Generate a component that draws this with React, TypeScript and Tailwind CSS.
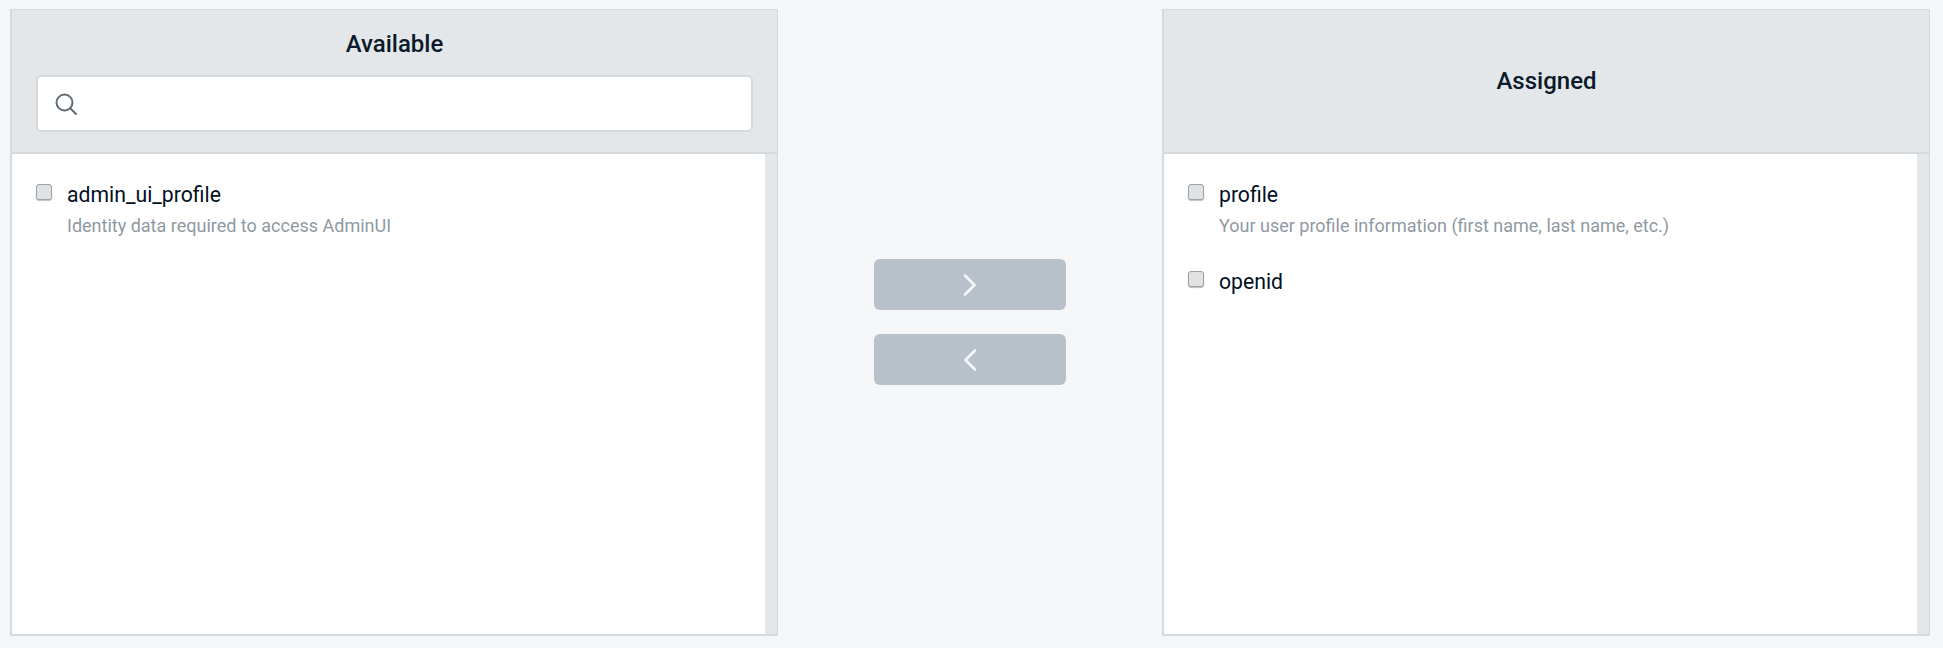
import React from "react";

const font = { fontFamily: "Roboto, sans-serif" };

function Check() {
  return (
    <span className="block w-4 h-4 shrink-0 mt-[3px] rounded-[3px] border border-[#9da1a6] bg-[#e0e2e4] shadow-[0_1px_1px_rgba(0,0,0,0.25)]" />
  );
}

function Item({ name, desc }: { name: string; desc?: string }) {
  return (
    <div className="flex gap-[15px]">
      <Check />
      <div className="min-w-0">
        <div className="text-[21.2px] leading-[28px] text-[#03101f] font-normal">{name}</div>
        {desc && <div className="text-[18px] leading-[24px] mt-[5px] text-[#8f99a3]">{desc}</div>}
      </div>
    </div>
  );
}

function Panel({ title, search, children }: { title: string; search?: boolean; children: React.ReactNode }) {
  return (
    <div className="w-[768px] h-[627px] flex flex-col border-t border-r border-b-2 border-l-2 border-[#d5dade] bg-white">
      <div className="h-[144px] shrink-0 bg-[#e4e7ea] border-b-2 border-[#d5dade] flex flex-col items-center">
        {search ? (
          <>
            <div className="text-[24px] leading-[30px] font-medium text-[#0a1a2b] mt-[19px]">{title}</div>
            <div className="mt-[16px] w-[717px] h-[57px] bg-white rounded-[5px] border-2 border-[#d5dade] flex items-center pl-[16px]">
              <svg width="24" height="24" viewBox="0 0 24 24" fill="none" stroke="#5f6b76" strokeWidth="2" strokeLinecap="round">
                <circle cx="10.5" cy="10.5" r="8" />
                <path d="M16.5 16.5l5.5 5.5" />
              </svg>
            </div>
          </>
        ) : (
          <div className="my-auto text-[24px] leading-[30px] font-medium text-[#0a1a2b]">{title}</div>
        )}
      </div>
      <div className="flex-1 flex min-h-0">
        <div className="flex-1 pl-[24px] pt-[27px] flex flex-col gap-[30px]">{children}</div>
        <div className="w-[12px] bg-[#e4e7ea]" />
      </div>
    </div>
  );
}

function ArrowBtn({ dir }: { dir: "r" | "l" }) {
  return (
    <div className="w-[192px] h-[51px] rounded-[6px] bg-[#b8c0ca] flex items-center justify-center">
      <svg width="16" height="24" viewBox="0 0 16 24" fill="none" stroke="#f4f6f8" strokeWidth="2.8" strokeLinecap="round" strokeLinejoin="round">
        <path d={dir === "r" ? "M3 2.5l9.5 9.5L3 21.5" : "M13 2.5L3.5 12l9.5 9.5"} />
      </svg>
    </div>
  );
}

export default function App() {
  return (
    <div className="w-[1943px] h-[648px] bg-[#f4f6f8] pt-[9px] pl-[10px] flex items-start overflow-hidden" style={font}>
      <Panel title="Available" search>
        <Item name="admin_ui_profile" desc="Identity data required to access AdminUI" />
      </Panel>
      <div className="w-[384px] h-[627px] flex flex-col items-center gap-[24px] pt-[250px]">
        <ArrowBtn dir="r" />
        <ArrowBtn dir="l" />
      </div>
      <Panel title="Assigned">
        <Item name="profile" desc="Your user profile information (first name, last name, etc.)" />
        <Item name="openid" />
      </Panel>
    </div>
  );
}
